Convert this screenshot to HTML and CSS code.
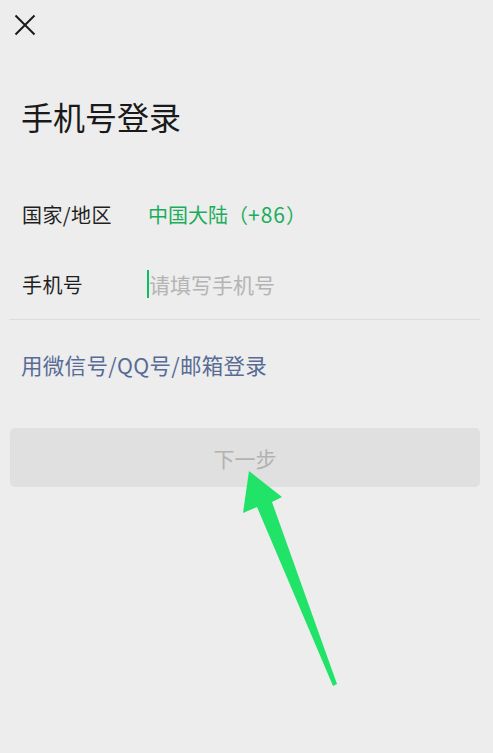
FILE: index.html
```html
<!DOCTYPE html>
<html lang="zh-CN">
<head>
<meta charset="utf-8">
<title>手机号登录</title>
<link rel="stylesheet" href="styles.css">
</head>
<body>
<div class="page">
  <header class="topbar">
    <svg class="close" width="22" height="22" viewBox="0 0 22 22" aria-label="关闭">
      <path d="M1.5 1.5 L20.5 20.5 M20.5 1.5 L1.5 20.5" stroke="#1a1a1a" stroke-width="2" fill="none"/>
    </svg>
  </header>
  <h1 class="title">手机号登录</h1>
  <div class="form">
    <div class="row">
      <span class="label">国家/地区</span>
      <span class="value green">中国大陆（<span class="num">+86</span>）</span>
    </div>
    <div class="row">
      <span class="label">手机号</span>
      <span class="value"><span class="cursor"></span><span class="placeholder">请填写手机号</span></span>
    </div>
  </div>
  <div class="divider"></div>
  <a class="link">用微信号/QQ号/邮箱登录</a>
  <div class="btn">下一步</div>
  <svg class="arrow" width="493" height="753" viewBox="0 0 493 753">
    <polygon points="249,471 243,513 257,507 333,686 337,684 272,502 282,497" fill="#21e368"/>
  </svg>
</div>
</body>
</html>
```

FILE: styles.css
```css
html, body {
  margin: 0;
  padding: 0;
  background: #ededed;
}
body {
  font-family: "Noto Sans CJK SC", "Noto Sans", sans-serif;
  color: #191919;
}
.page {
  position: relative;
  width: 493px;
  height: 753px;
  overflow: hidden;
  display: flex;
  flex-direction: column;
}
.topbar {
  height: 50px;
  padding: 14px 0 0 14px;
  box-sizing: border-box;
}
.close {
  display: block;
}
.title {
  margin: 46px 0 0 0;
  padding-left: 21px;
  font-size: 32px;
  line-height: 40px;
  font-weight: 400;
  color: #1a1a1a;
}
.form {
  margin-top: 43px;
  padding-left: 22px;
}
.row {
  height: 70px;
  display: flex;
  align-items: center;
  font-size: 20px;
}
.label {
  width: 125px;
  flex: none;
  color: #1f1f1f;
  letter-spacing: 0.4px;
}
.value {
  display: flex;
  align-items: center;
}
.green {
  color: #1aad5a;
  padding-left: 1px;
}
.num {
  letter-spacing: 1px;
  font-size: 21px;
}
.cursor {
  width: 2px;
  height: 28px;
  background: #07c160;
}
.placeholder {
  color: #b4b4b4;
  font-size: 21px;
}
.divider {
  height: 1px;
  background: #dcdcdc;
  margin: 0 13px 0 9px;
}
.link {
  margin-top: 30px;
  padding-left: 21px;
  font-size: 21.5px;
  line-height: 30px;
  color: #586b95;
  letter-spacing: 0.3px;
}
.btn {
  margin: 48px 13px 0 10px;
  height: 59px;
  border-radius: 5px;
  background: #e0e0e0;
  color: #b2b2b2;
  font-size: 21px;
  display: flex;
  align-items: center;
  justify-content: center;
}
.arrow {
  position: absolute;
  left: 0;
  top: 0;
  pointer-events: none;
}
```
